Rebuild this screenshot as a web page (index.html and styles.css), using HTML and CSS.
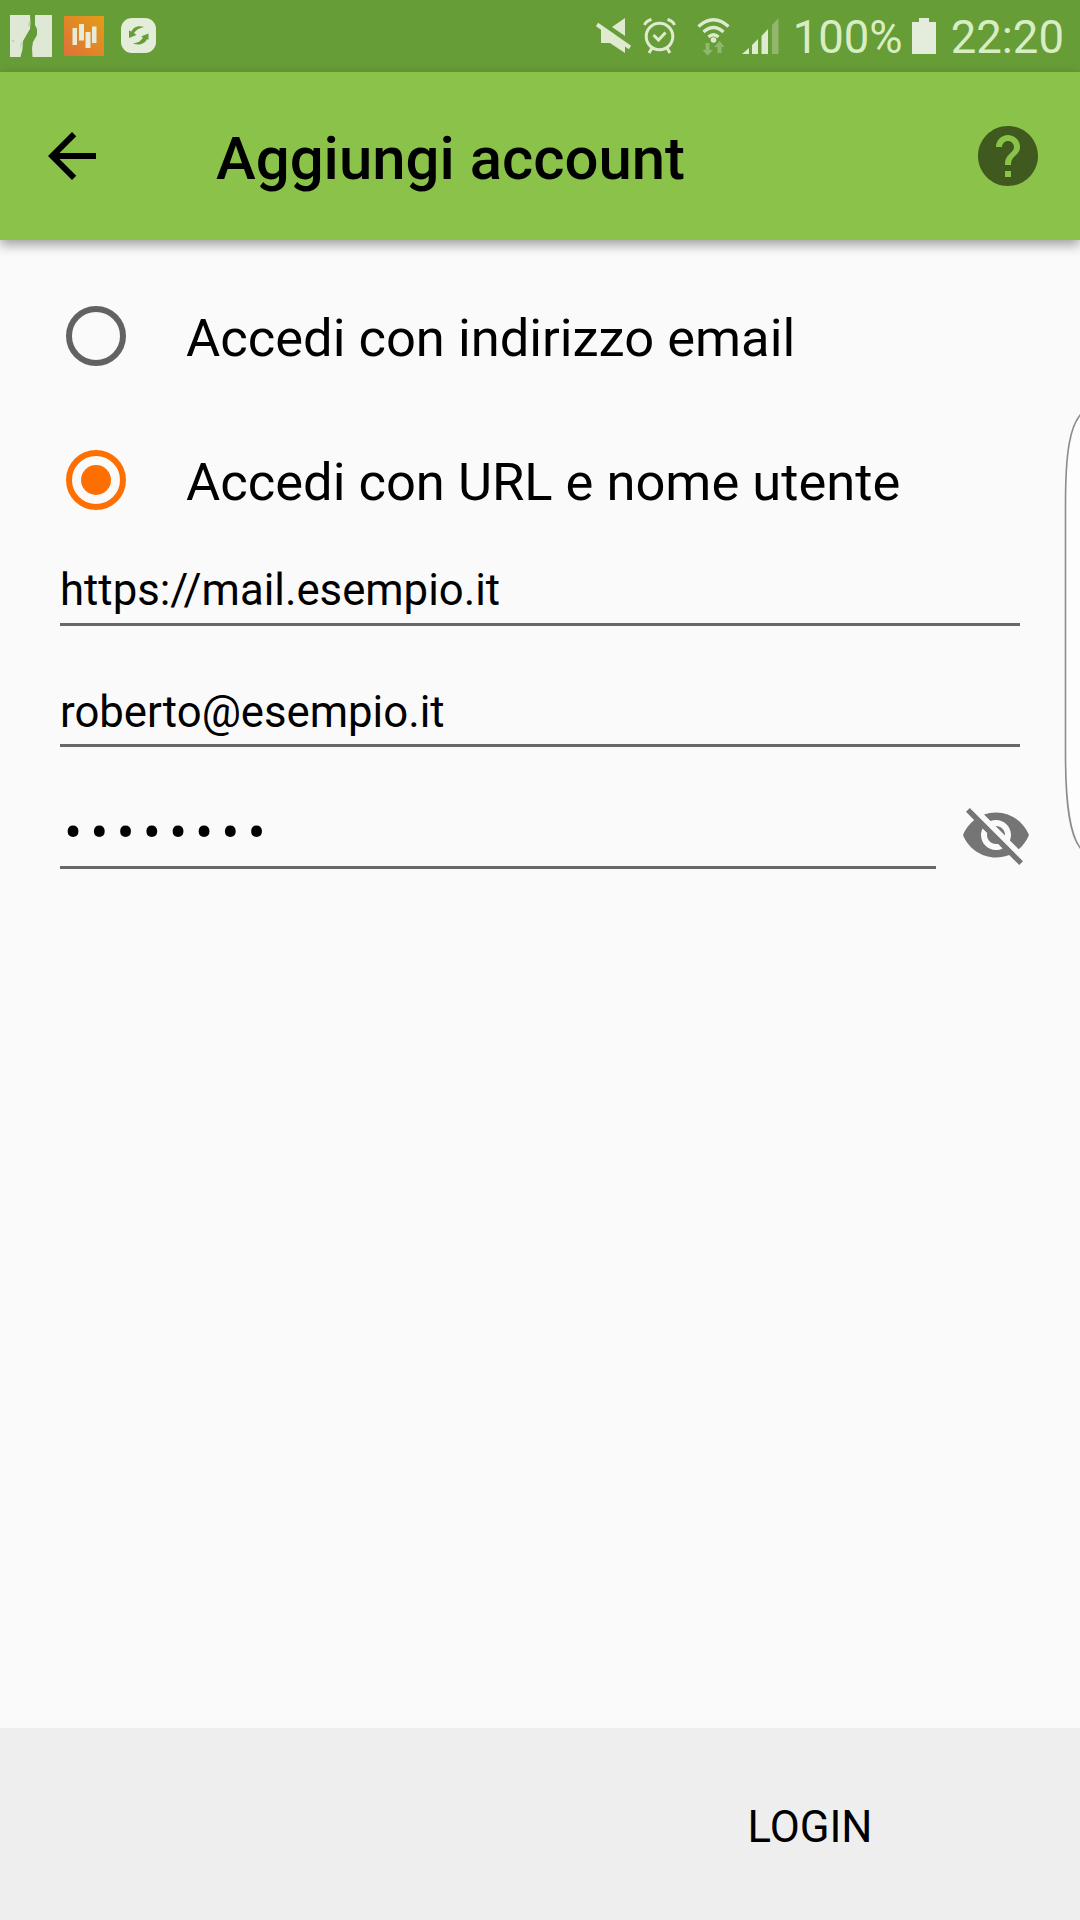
FILE: index.html
```html
<!DOCTYPE html>
<html lang="it">
<head>
<meta charset="utf-8">
<title>Aggiungi account</title>
<link rel="stylesheet" href="styles.css">
</head>
<body>
<div class="screen">
  <div class="status-bar">
    <div class="notifications">
      <svg class="thumb" width="42" height="42" viewBox="0 0 42 42">
        <path fill="#dfe8d4" d="M0 0h42v42H0z"/>
        <path fill="#659c38" d="M20 0h5v10l2 4v6l-4 7-1 6 .5 9H10.500l2-8 .5-8 4-7 3-5 .5-5z"/>
        <path fill="#a9c58b" d="M19 6l1.500 1-1 5-1.500-1zM11 27l1.500 1-2.500 7zM2 25h2v2H2z" opacity=".6"/>
      </svg>
      <svg class="chart" width="40" height="40" viewBox="0 0 40 40">
        <defs><linearGradient id="amber" x1="1" y1="0" x2="0" y2="1"><stop stop-color="#e39d16"/><stop offset="1" stop-color="#df7138"/></linearGradient></defs>
        <path fill="url(#amber)" d="M0 0h40v40H0z"/>
        <path fill="#e8ebd8" d="M8.500 12h4.500v17H8.500zM15 8h5v16.500h-5zM21.500 16h5v16h-5zM28 10.500h4.500V27H28z"/>
      </svg>
      <svg class="sync" width="36" height="36" viewBox="0 0 36 36">
        <rect width="35" height="35" rx="11" fill="#e3edda"/>
        <path fill="#669d37" d="M23 9C16 7 12 10 10.500 13.500L8 12.500V20l7.500-3-2.500-2c2-3 5-5 10-6zM12 25.500c7 2.500 12 0 14-4.500l1.500 1v-6.500L20 18.500l2 1c-2 3.500-5 5.500-10 6z"/>
      </svg>
    </div>
    <div class="indicators">
      <svg class="mute" width="36" height="38" viewBox="0 0 36 38">
        <path fill="#dfeacf" d="M29 1v18L16 10zM5 12h5l19 14v10L14 26H5z"/>
        <path stroke="#dfeacf" stroke-width="4" d="M1 7.500l33 23"/>
      </svg>
      <svg class="alarm" width="34" height="38" viewBox="0 0 34 38" fill="none" stroke="#dfeacf">
        <circle cx="16.500" cy="19.500" r="13.300" stroke-width="3"/>
        <path stroke-width="3" d="M10.500 18l5 5 7-7.500M1.500 8Q3 4 8.500 2.500M24.500 2.500Q30 4 31.500 8M9 31l-3 5M24 31l3 5"/>
      </svg>
      <svg class="wifi" width="34" height="38" viewBox="0 0 34 38">
        <path fill="none" stroke="#dfeacf" stroke-width="3.300" d="M1.500 9.500Q16.500-4 31.500 9.500M6.500 15q10-9 20 0M11.500 20q5-4.500 10 0"/>
        <circle cx="16.500" cy="23" r="2.800" fill="#dfeacf"/>
        <path fill="#91b66d" d="M8.500 26h4v7h3.500l-5.500 5.500L5.500 33h3zM20.500 36v-6H17l5.500-6 5 6h-3v6z"/>
      </svg>
      <svg class="signal" width="38" height="38" viewBox="0 0 38 38">
        <path fill="#dfeacf" d="M1 37l7-6v6zM11 28l6-6v15h-6zM20.500 19l6.500-7v25h-6.500z"/>
        <path fill="#91b66d" d="M31 8l6.500-7v36H31z"/>
      </svg>
      <span class="percent">100%</span>
      <svg class="battery" width="24" height="36" viewBox="0 0 24 36"><path fill="#e4eddb" d="M7 0h10v4h7v32H0V4h7z"/></svg>
      <span class="clock">22:20</span>
    </div>
  </div>

  <header class="app-bar">
    <svg width="72" height="72" viewBox="0 0 24 24"><path d="M20 11H7.830l5.590-5.590L12 4l-8 8 8 8 1.410-1.410L7.830 13H20v-2z"/></svg>
    <h1 class="title">Aggiungi account</h1>
    <svg class="help" width="72" height="72" viewBox="0 0 24 24"><path d="M12 2C6.480 2 2 6.480 2 12s4.480 10 10 10 10-4.480 10-10S17.520 2 12 2zm1 17h-2v-2h2v2zm2.070-7.750l-.9.920C13.450 12.900 13 13.500 13 15h-2v-.5c0-1.100.45-2.100 1.170-2.830l1.240-1.260c.37-.36.59-.86.59-1.410 0-1.100-.9-2-2-2s-2 .9-2 2H8c0-2.210 1.790-4 4-4s4 1.790 4 4c0 .88-.36 1.680-.93 2.250z"/></svg>
  </header>

  <main class="form">
    <div class="option"><span class="radio"></span><span class="option-label">Accedi con indirizzo email</span></div>
    <div class="option"><span class="radio checked"></span><span class="option-label">Accedi con URL e nome utente</span></div>
    <div class="field">https://mail.esempio.it</div>
    <div class="field">roberto@esempio.it</div>
    <div class="password-row">
      <div class="field password">••••••••</div>
      <svg class="eye" width="72" height="72" viewBox="0 0 24 24"><path d="M12 7c2.760 0 5 2.240 5 5 0 .65-.13 1.260-.36 1.830l2.920 2.920c1.510-1.260 2.700-2.890 3.430-4.750-1.730-4.390-6-7.500-11-7.500-1.400 0-2.740.25-3.980.7l2.160 2.160C10.740 7.130 11.350 7 12 7zM2 4.270l2.280 2.280.46.46C3.080 8.300 1.780 10.020 1 12c1.730 4.390 6 7.500 11 7.500 1.550 0 3.030-.3 4.380-.84l.42.42L19.730 22 21 20.730 3.270 3 2 4.270zM7.530 9.800l1.550 1.550c-.05.21-.08.43-.08.65 0 1.660 1.340 3 3 3 .22 0 .44-.03.65-.08l1.550 1.550c-.67.33-1.410.53-2.200.53-2.760 0-5-2.240-5-5 0-.79.2-1.530.53-2.200zm4.310-.78l3.150 3.150.02-.16c0-1.660-1.340-3-3-3l-.17.01z"/></svg>
    </div>
  </main>

  <footer class="footer"><span class="login">LOGIN</span></footer>

  <svg class="edge-handle" width="16" height="436" viewBox="0 0 16 436"><path d="M17 0C6 12 1.500 38 1.500 90v250c0 52 4.500 82 15.500 95" fill="#fdfdfd" stroke="#8c8c8c" stroke-width="1.600"/></svg>
</div>
</body>
</html>
```
FILE: styles.css
```css
* { box-sizing: border-box; }
body { margin: 0; font-family: Roboto, sans-serif; color: #000; }
svg { display: block; flex: none; }

.screen {
  position: relative;
  display: flex;
  flex-direction: column;
  width: 1080px;
  height: 1920px;
  overflow: hidden;
  background: #fafafa;
}

.status-bar {
  display: flex;
  justify-content: space-between;
  height: 72px;
  padding: 0 16px 0 10px;
  background: #669d37;
}
.notifications { display: flex; align-items: center; }
.chart { margin-left: 12px; }
.sync { margin-left: 17px; }
.indicators {
  display: flex;
  align-items: center;
  font-size: 45.5px;
  line-height: 72px;
  color: #d9edc4;
}
.alarm { margin-left: 11px; }
.wifi { margin-left: 20px; }
.signal { margin-left: 10px; }
.percent { margin-left: 14px; padding-top: 4px; }
.battery { margin-left: 9px; }
.clock { margin-left: 15px; padding-top: 4px; }

.app-bar {
  z-index: 1;
  display: flex;
  align-items: center;
  height: 168px;
  padding: 0 36px;
  background: #8bc34a;
  box-shadow: 0 5px 11px rgba(0, 0, 0, 0.36);
}
.title {
  flex: 1;
  margin: 0;
  padding: 5px 0 0 108px;
  font-size: 59.9px;
  font-weight: 500;
  line-height: 72px;
}
.help { fill: #40591f; }

.form { flex: 1; padding: 24px 60px 0; }
.option {
  display: flex;
  align-items: center;
  gap: 60px;
  height: 144px;
  padding-left: 6px;
}
.option-label { padding-top: 4px; font-size: 52.5px; line-height: 72px; }
.radio {
  display: flex;
  align-items: center;
  justify-content: center;
  width: 60px;
  height: 60px;
  border: 6px solid #626262;
  border-radius: 50%;
}
.checked { border-color: #ff6f00; }
.checked::after {
  content: "";
  width: 30px;
  height: 30px;
  border-radius: 50%;
  background: #ff6f00;
}

.field {
  height: 74px;
  margin-bottom: 48px;
  padding-top: 5px;
  border-bottom: 3px solid #686868;
  font-size: 43.7px;
  line-height: 66px;
}
.field + .field { height: 73px; }
.password-row { display: flex; gap: 24px; margin-right: -12px; }
.password {
  flex: 1;
  padding-left: 4px;
  font-size: 54px;
  letter-spacing: 8px;
}
.eye { margin-top: 4px; fill: #757575; }

.footer {
  display: flex;
  align-items: center;
  height: 192px;
  padding-left: 540px;
  background: #eee;
}
.login { flex: 1; padding-top: 5px; font-size: 43.7px; text-align: center; }

.edge-handle { position: absolute; right: 0; top: 414px; }
```
